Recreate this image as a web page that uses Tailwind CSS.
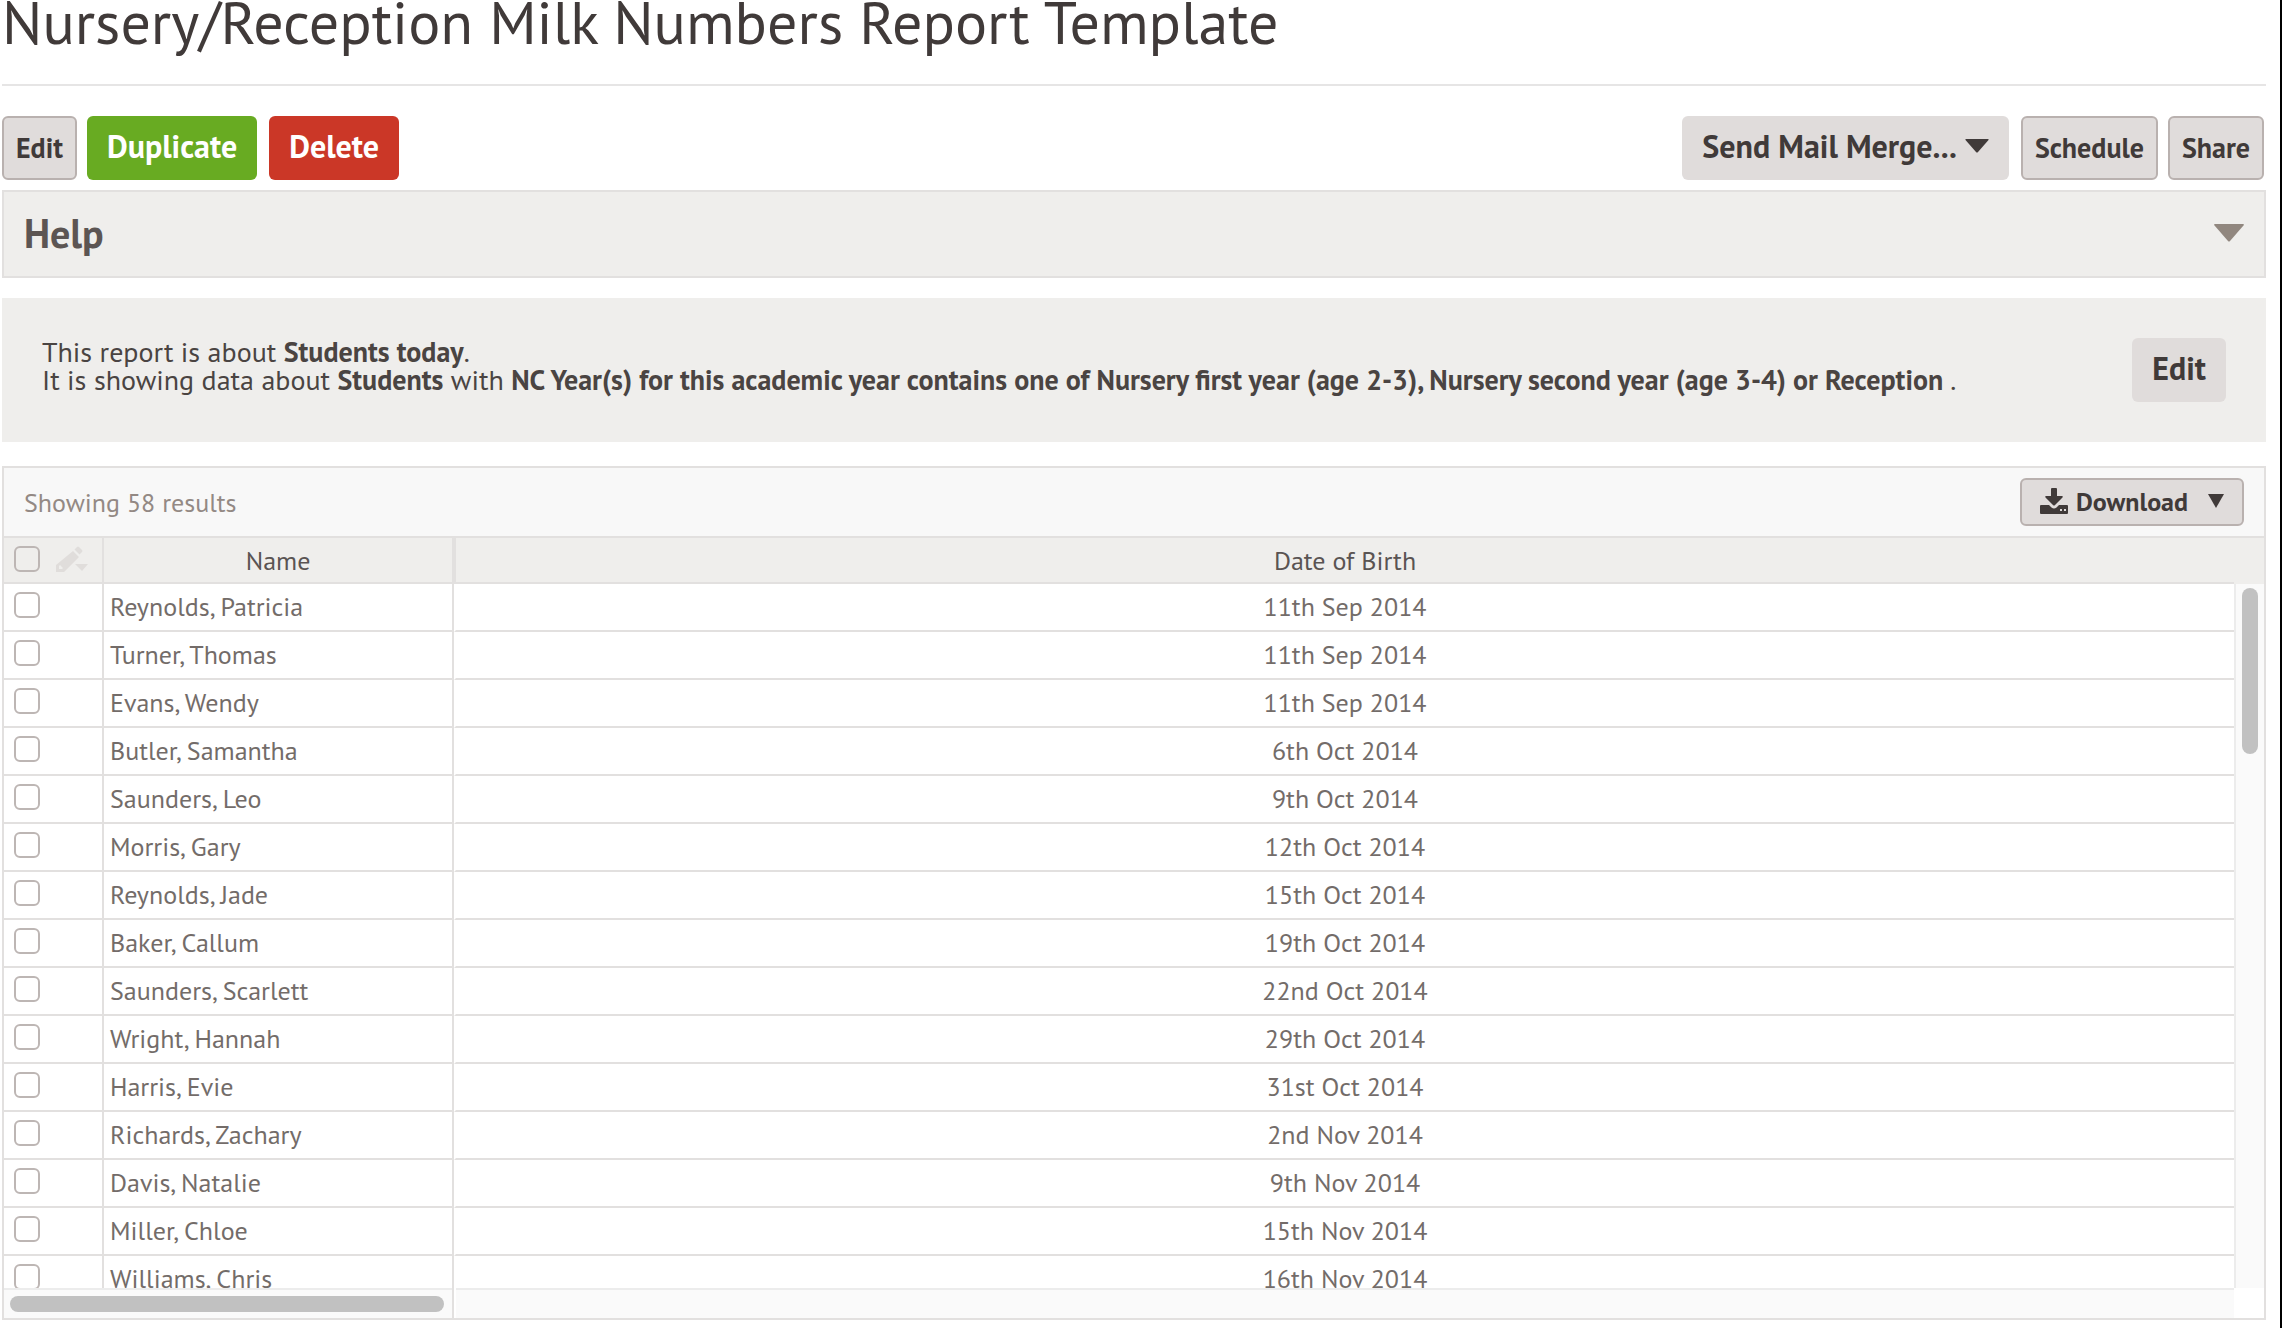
<!DOCTYPE html>
<html lang="en">
  <head>
    <meta charset="UTF-8" />
    <meta name="viewport" content="width=device-width, initial-scale=1.0" />
    <title>Nursery/Reception Milk Numbers Report Template</title>
    <script src="https://cdn.jsdelivr.net/npm/@tailwindcss/browser@4"></script>
  </head>
  <body
    class="min-h-screen bg-white border-r-2 border-black pl-[2px] pr-[14px] font-['PT_Sans','Noto_Sans',sans-serif] text-[#403a39]"
  >
    <h1 class="text-[60px] leading-[44px] pb-10 border-b-2 border-[#e6e5e5]">
      Nursery/Reception Milk Numbers Report Template
    </h1>

    <div class="flex flex-wrap justify-between pt-[30px] pb-[10px] pr-[2px]">
      <div class="flex gap-3">
        <button
          type="button"
          class="h-16 px-3 -mr-[2px] text-[28px] font-bold bg-[#e0dcdb] border-2 border-[#b9b1af] rounded-md"
        >
          Edit
        </button>
        <button
          type="button"
          class="h-16 px-5 pb-1 text-[32px] font-bold text-white bg-[#68ab22] rounded-md"
        >
          Duplicate
        </button>
        <button
          type="button"
          class="h-16 px-5 pb-1 text-[32px] font-bold text-white bg-[#cb3727] rounded-md"
        >
          Delete
        </button>
      </div>
      <div class="flex gap-3">
        <button
          type="button"
          class="flex items-center gap-2 h-16 px-5 pb-1 text-[32px] font-bold bg-[#e0dcdb] rounded-md"
        >
          Send Mail Merge...
          <svg class="w-6 h-[14px]" viewBox="0 0 24 14" fill="currentColor">
            <path d="M1 0h22q1 0 .5 1L13 13q-1 1-2 0L.5 1Q0 0 1 0z" />
          </svg>
        </button>
        <button
          type="button"
          class="h-16 px-3 -mr-[2px] text-[28px] font-bold bg-[#e0dcdb] border-2 border-[#b9b1af] rounded-md"
        >
          Schedule
        </button>
        <button
          type="button"
          class="h-16 px-3 text-[28px] font-bold bg-[#e0dcdb] border-2 border-[#b9b1af] rounded-md"
        >
          Share
        </button>
      </div>
    </div>

    <button
      type="button"
      onclick="toggleHelp()"
      class="flex justify-between items-center w-full h-[88px] px-5 pb-[2px] bg-[#efeeec] border-2 border-[#e2e0df]"
    >
      <span class="text-[40px] font-bold text-[#5c5553]">Help</span>
      <svg
        id="helpArrow"
        class="w-[30px] h-[18px] text-[#91877f]"
        viewBox="0 0 30 18"
        fill="currentColor"
      >
        <path d="M1 0h28q1.500 0 .5 1.500L16 17q-1 1-2 0L.5 1.500Q-.5 0 1 0z" />
      </svg>
    </button>

    <div
      class="flex justify-between items-start gap-10 mt-5 p-10 bg-[#efeeec] text-[28px] leading-[28px]"
    >
      <p class="text-[#4a4442]">
        This report is about <b>Students today</b>.<br />
        It is showing data about <b>Students</b> with
        <b
          >NC Year(s) for this academic year contains one of Nursery first year
          (age 2-3), Nursery second year (age 3-4) or Reception</b
        >
        .
      </p>
      <button
        type="button"
        class="h-16 px-5 pb-1 text-[32px] font-bold bg-[#e0dcdb] rounded-md"
      >
        Edit
      </button>
    </div>

    <div class="mt-6 border-2 border-[#e2e0df] text-[26px]">
      <div class="flex justify-between items-center h-[68px] px-5 bg-[#f8f8f8]">
        <p class="text-[#938984]">Showing 58 results</p>
        <button
          type="button"
          class="flex items-center h-12 px-[18px] pb-[2px] font-bold bg-[#e0dcdb] border-2 border-[#b9b1af] rounded-md"
        >
          <svg class="w-7 h-[26px] mr-2" viewBox="0 0 28 26" fill="currentColor">
            <path
              d="M11 1q0-1 1-1h4q1 0 1 1v7h5q1.500 0 .5 1.500l-7.500 7.500q-1 1-2 0L5.500 9.500Q4.500 8 6 8h5z"
            />
            <path
              fill-rule="evenodd"
              d="M1 17h8l2.500 2.500q2.500 2 5 0L19 17h8q1 0 1 1v7q0 1-1 1H1q-1 0-1-1v-7q0-1 1-1zM20 21v2h2v-2zM24 21v2h2v-2z"
            />
          </svg>
          Download
          <svg class="w-4 h-[14px] ml-5" viewBox="0 0 16 14" fill="currentColor">
            <path d="M0 0h16L8 14z" />
          </svg>
        </button>
      </div>

      <div class="flex border-t-2 border-[#e2e0df]">
        <!-- frozen columns -->
        <div class="w-[450px] shrink-0 border-r-2 border-[#e2e0df]">
          <div class="h-[750px] overflow-hidden">
            <table class="w-full table-fixed border-separate border-spacing-0">
              <thead class="bg-[#efeeec] text-[#5a5453]">
                <tr>
                  <th class="w-[100px] h-[46px] border-r-2 border-b-2 border-[#e2e0df] p-0 pb-[2px]">
                    <div class="flex gap-4 pl-[10px]">
                      <input
                        type="checkbox"
                        id="selectAll"
                        aria-label="Select all"
                        onchange="selectAllRows(this.checked)"
                        class="appearance-none size-[26px] border-2 border-[#bdb6b4] rounded-md checked:bg-[#bdb6b4]"
                      />
                      <button type="button" aria-label="Bulk edit">
                        <svg
                          class="w-8 h-[26px] text-[#e0dddb]"
                          viewBox="0 0 32 26"
                          fill="currentColor"
                        >
                          <path
                            fill-rule="evenodd"
                            d="M17 5l6 6L8 26H0v-7zM3 20v3h3l1-1-3-3z"
                          />
                          <path d="M18.500 3.500L21 1q1-1 2 0l3 3q1 1 0 2l-2.500 2.500z" />
                          <path d="M19 18h13l-6 7z" />
                        </svg>
                      </button>
                    </div>
                  </th>
                  <th class="border-b-2 border-[#e2e0df] p-0 font-normal">Name</th>
                </tr>
              </thead>
              <tbody id="nameBody" class="text-[#736c69]"></tbody>
            </table>
          </div>
          <div class="h-[30px] border-t-2 border-[#ececec] bg-[#fafafa] pl-[6px] pr-2 pt-[6px]">
            <div class="h-4 rounded-full bg-[#c1c1c1]"></div>
          </div>
        </div>

        <!-- scrolling columns -->
        <div class="grow">
          <div class="flex h-[750px] overflow-hidden">
            <table class="grow table-fixed self-start border-separate border-spacing-0">
              <thead class="bg-[#efeeec] text-[#5a5453]">
                <tr>
                  <th
                    class="h-[46px] border-l-2 border-b-2 border-[#e2e0df] p-0 font-normal"
                  >
                    Date of Birth
                  </th>
                </tr>
              </thead>
              <tbody id="dateBody" class="text-[#736c69]"></tbody>
            </table>
            <div class="flex flex-col w-[30px]">
              <div class="h-[46px] bg-[#efeeec]"></div>
              <div class="grow bg-[#fafafa] border-l-2 border-[#ececec] pl-[6px] pt-1">
                <div class="w-4 h-[166px] rounded-full bg-[#c1c1c1]"></div>
              </div>
            </div>
          </div>
          <div class="h-[30px] ml-[2px] mr-[30px] border-t-2 border-[#ececec] bg-[#fafafa]"></div>
        </div>
      </div>
    </div>

    <script>
      const students = [
        { name: "Reynolds, Patricia", dob: "11th Sep 2014" },
        { name: "Turner, Thomas", dob: "11th Sep 2014" },
        { name: "Evans, Wendy", dob: "11th Sep 2014" },
        { name: "Butler, Samantha", dob: "6th Oct 2014" },
        { name: "Saunders, Leo", dob: "9th Oct 2014" },
        { name: "Morris, Gary", dob: "12th Oct 2014" },
        { name: "Reynolds, Jade", dob: "15th Oct 2014" },
        { name: "Baker, Callum", dob: "19th Oct 2014" },
        { name: "Saunders, Scarlett", dob: "22nd Oct 2014" },
        { name: "Wright, Hannah", dob: "29th Oct 2014" },
        { name: "Harris, Evie", dob: "31st Oct 2014" },
        { name: "Richards, Zachary", dob: "2nd Nov 2014" },
        { name: "Davis, Natalie", dob: "9th Nov 2014" },
        { name: "Miller, Chloe", dob: "15th Nov 2014" },
        { name: "Williams, Chris", dob: "16th Nov 2014" },
      ];

      const renderTables = () => {
        students.forEach((student, index) => {
          const nameRow = document.createElement("tr");
          nameRow.innerHTML = `
            <td class="h-12 border-r-2 border-b-2 border-[#e2e0df] p-0 pl-[10px] pb-1">
              <input type="checkbox" id="row${index}" class="row-check block appearance-none size-[26px] border-2 border-[#bdb6b4] rounded-md checked:bg-[#bdb6b4]" />
            </td>
            <td class="border-b-2 border-[#e2e0df] p-0 pl-[6px] pb-[2px]"><label for="row${index}">${student.name}</label></td>
          `;
          document.getElementById("nameBody").appendChild(nameRow);

          const dateRow = document.createElement("tr");
          dateRow.innerHTML = `<td class="h-12 border-l-2 border-l-white border-b-2 border-b-[#e2e0df] p-0 pb-[2px] text-center">${student.dob}</td>`;
          document.getElementById("dateBody").appendChild(dateRow);
        });
      };

      const selectAllRows = (checked) => {
        document.querySelectorAll(".row-check").forEach((box) => {
          box.checked = checked;
        });
      };

      const toggleHelp = () => {
        document.getElementById("helpArrow").classList.toggle("rotate-180");
      };

      renderTables();
    </script>
  </body>
</html>
